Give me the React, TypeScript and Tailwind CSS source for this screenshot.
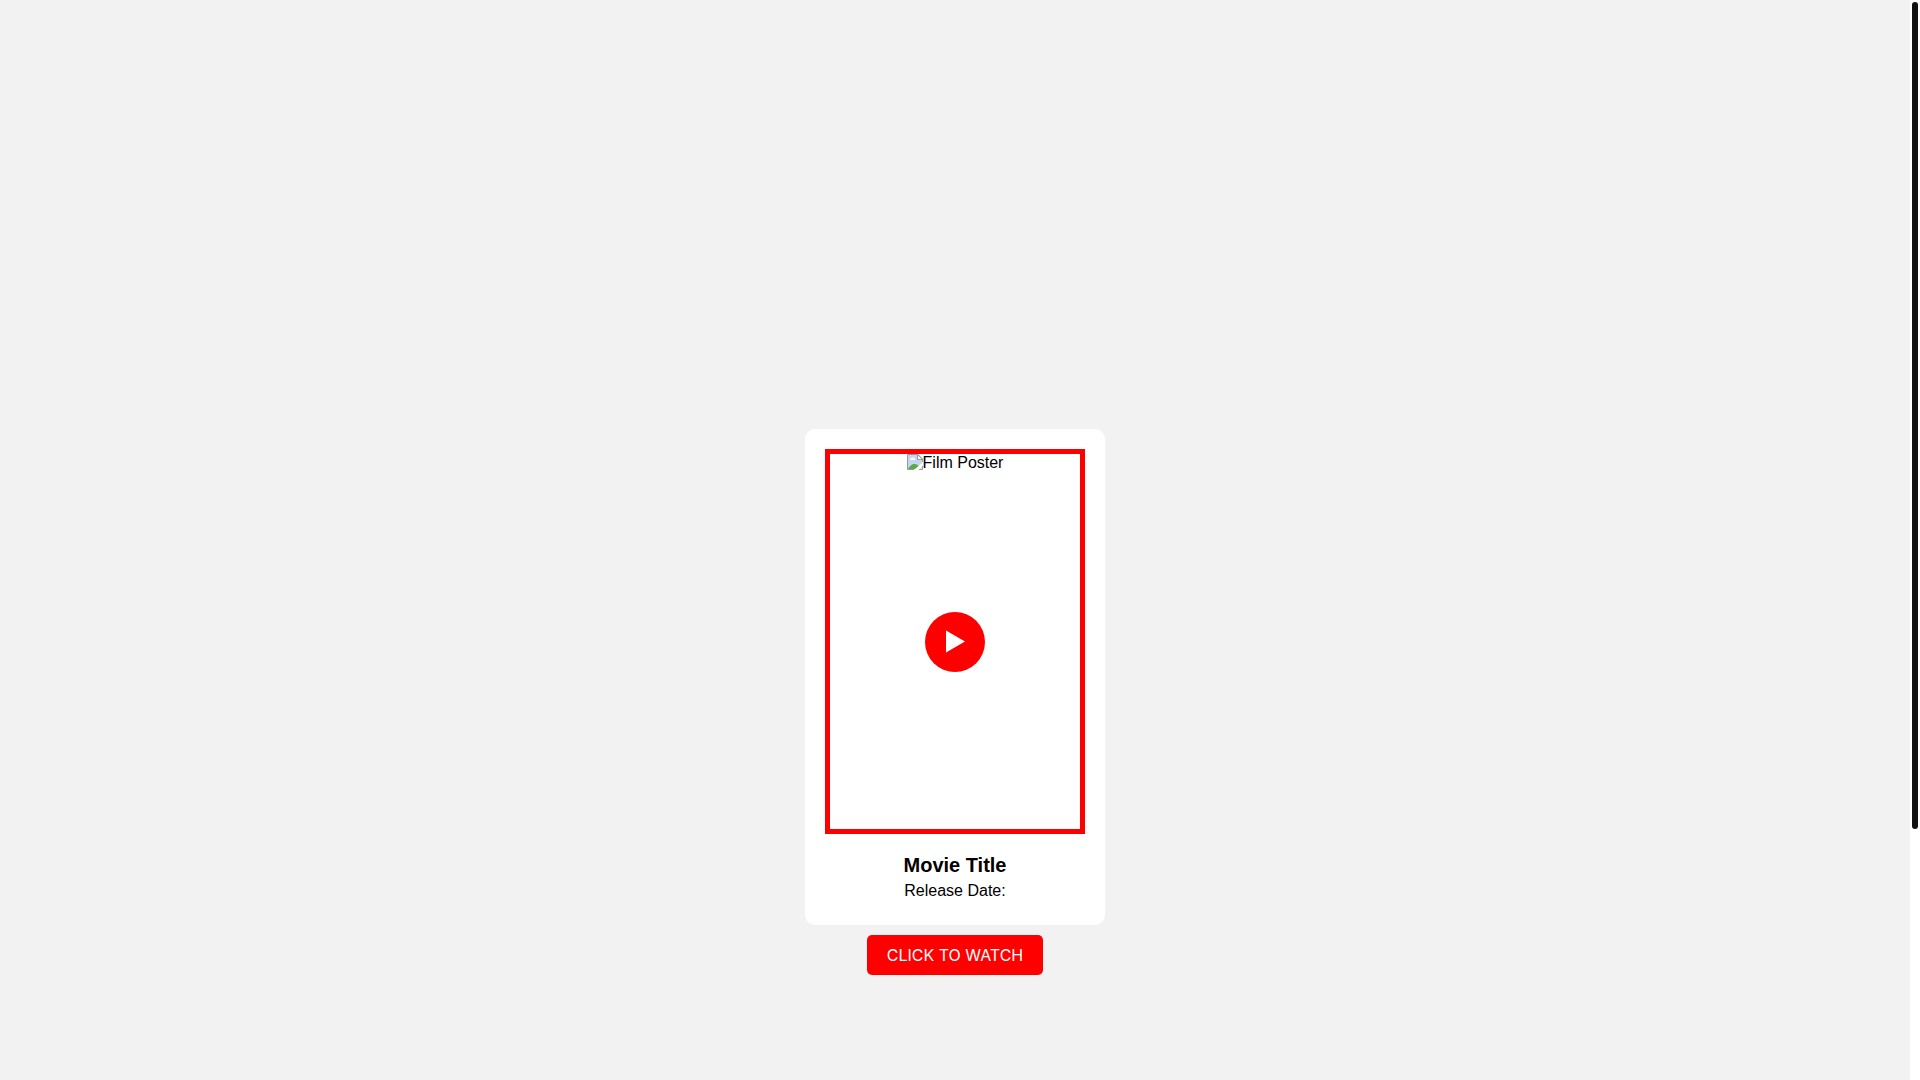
const BrokenImageIcon = () => (
  <svg className="w-4 h-4 shrink-0" viewBox="0 0 16 16" aria-hidden="true">
    <path d="M1 1h10l4 4v10H1z" fill="#c3d4f5" />
    <path d="M3 5.500c0-1 1-1.600 1.800-1.200C5.300 3 7.500 3.200 7.600 4.600c1 0 1.200 1.400.2 1.400H3.500z" fill="#fff" />
    <path d="M1 15c1.500-3 4-5 6.500-5 2 0 3.500 1 4.500 2.500L9.500 15z" fill="#58ac3c" />
    <path d="M7 16l9-8v4l-4 4z" fill="#fff" />
    <path d="M.5 15.500V.5h10.500l4.500 4.500v3M.5 15.500H7M12 15.500h3.500V12" fill="none" stroke="#9a9a9a" />
    <path d="M10.500.5v5h5z" fill="#fff" stroke="#9a9a9a" />
  </svg>
);

const MovieCard = () => {
  return (
    <div className="w-[300px] p-5 bg-white rounded-[10px] text-center">
      <div className="relative h-[385px] border-5 border-[#ff0000]">
        <div className="flex justify-center leading-[18px]">
          <BrokenImageIcon />
          <span>Film Poster</span>
        </div>
        <button
          aria-label="Play"
          className="absolute inset-0 m-auto w-[60px] h-[60px] rounded-full bg-[#ff0000] flex items-center justify-center cursor-pointer"
        >
          <svg className="w-5 h-6" viewBox="0 0 20 24" fill="#fff">
            <path d="M1 .5l19 11L1 22.500z" />
          </svg>
        </button>
      </div>

      <h2 className="mt-5 text-xl leading-[23px] font-bold">Movie Title</h2>
      <p className="my-[5px] leading-[18px]">Release Date:</p>
    </div>
  );
};

// Thumb height is the viewport share of the 130vh page
const Scrollbar = () => (
  <div className="w-[10px] shrink-0 bg-white" aria-hidden="true">
    <div className="h-[76.9%] rounded-[5px] border-2 border-white bg-[#111111]" />
  </div>
);

const App = () => {
  return (
    <div className="h-screen flex bg-[#f2f2f2] text-black text-base font-['Liberation_Sans',Arial,sans-serif]">
      <div className="flex-1 overflow-y-auto [scrollbar-width:none]">
        <main className="min-h-[130vh] flex flex-col items-center justify-center gap-[10px]">
          <MovieCard />
          <a
            href="#watch"
            className="h-10 px-5 flex items-center rounded-[5px] bg-[#ff0000] text-white font-['Inter',sans-serif]"
          >
            CLICK TO WATCH
          </a>
        </main>
      </div>
      <Scrollbar />
    </div>
  );
};

export default App;
